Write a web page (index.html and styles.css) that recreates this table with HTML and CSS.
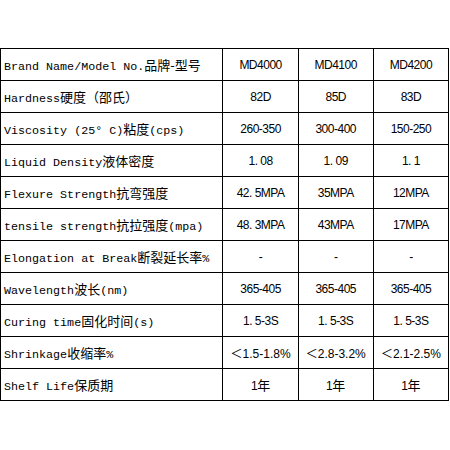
FILE: index.html
```html
<!DOCTYPE html>
<html>
<head>
<meta charset="utf-8">
<link rel="stylesheet" href="styles.css">
</head>
<body>
<table class="spec">
  <colgroup>
    <col class="c-name">
    <col class="c-val">
    <col class="c-val">
    <col class="c-val">
  </colgroup>
  <tr><td class="name">Brand Name/Model No.<span class="cn">品牌-型号</span></td><td>MD4000</td><td>MD4100</td><td>MD4200</td></tr>
  <tr><td class="name">Hardness<span class="cn">硬度（邵氏）</span></td><td>82D</td><td>85D</td><td>83D</td></tr>
  <tr><td class="name">Viscosity (25° C)<span class="cn">粘度</span>(cps)</td><td>260-350</td><td>300-400</td><td>150-250</td></tr>
  <tr><td class="name">Liquid Density<span class="cn">液体密度</span></td><td>1. 08</td><td>1. 09</td><td>1. 1</td></tr>
  <tr><td class="name">Flexure Strength<span class="cn">抗弯强度</span></td><td>42. 5MPA</td><td>35MPA</td><td>12MPA</td></tr>
  <tr><td class="name">tensile strength<span class="cn">抗拉强度</span>(mpa)</td><td>48. 3MPA</td><td>43MPA</td><td>17MPA</td></tr>
  <tr><td class="name">Elongation at Break<span class="cn">断裂延长率</span>%</td><td>-</td><td>-</td><td>-</td></tr>
  <tr><td class="name">Wavelength<span class="cn">波长</span>(nm)</td><td>365-405</td><td>365-405</td><td>365-405</td></tr>
  <tr><td class="name">Curing time<span class="cn">固化时间</span>(s)</td><td>1. 5-3S</td><td>1. 5-3S</td><td>1. 5-3S</td></tr>
  <tr><td class="name">Shrinkage<span class="cn">收缩率</span>%</td><td class="tight"><span class="cn lt">＜</span>1.5-1.8%</td><td class="tight"><span class="cn lt">＜</span>2.8-3.2%</td><td class="tight"><span class="cn lt">＜</span>2.1-2.5%</td></tr>
  <tr><td class="name">Shelf Life<span class="cn">保质期</span></td><td>1<span class="cn">年</span></td><td>1<span class="cn">年</span></td><td>1<span class="cn">年</span></td></tr>
</table>
</body>
</html>
```
FILE: styles.css
```css
html, body {
  margin: 0;
  padding: 0;
  background: #fff;
}
body {
  padding-top: 48px;
}
.spec {
  border-collapse: collapse;
  table-layout: fixed;
  width: 449px;
  color: #000;
}
.c-name { width: 222px; }
.c-val { width: 75px; }
.spec td {
  border: 1px solid #000;
  height: 31px;
  padding: 0;
  text-align: center;
  vertical-align: middle;
  font-family: "Liberation Sans", "Noto Sans CJK SC", sans-serif;
  font-size: 12px;
  letter-spacing: -0.5px;
  white-space: nowrap;
  overflow: hidden;
}
.spec td.tight {
  letter-spacing: 0;
}
.spec td.name {
  text-align: left;
  padding-left: 3px;
  font-family: "Liberation Mono", "Noto Sans CJK SC", monospace;
  font-size: 11.7px;
  letter-spacing: 0;
}
.cn {
  font-family: "Noto Sans CJK SC", sans-serif;
  font-size: 13px;
  letter-spacing: 0;
}
.lt {
  font-size: 12px;
}
```
